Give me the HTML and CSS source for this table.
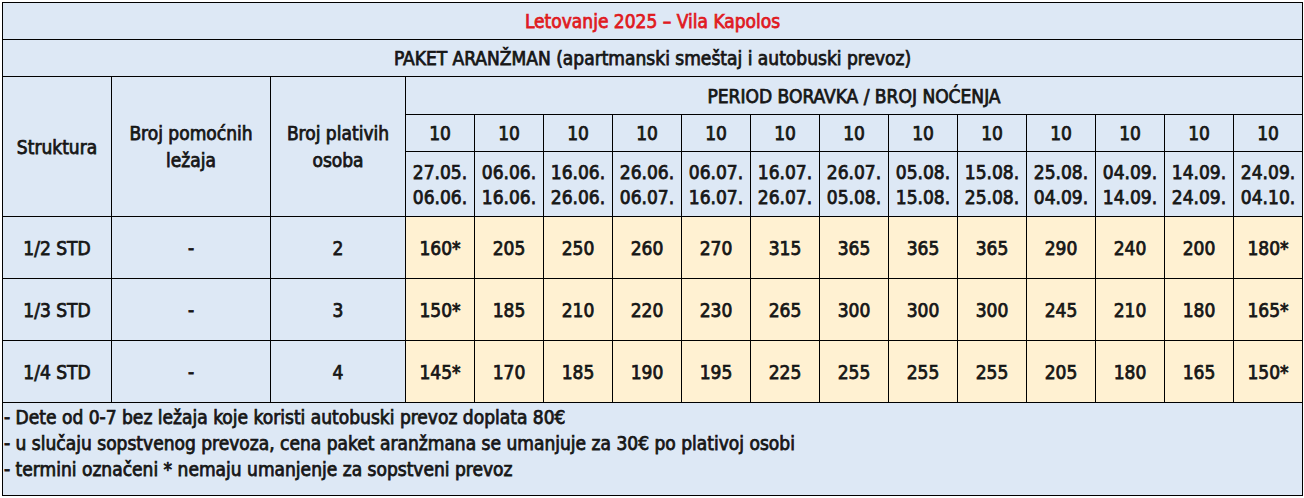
FILE: index.html
```html
<!DOCTYPE html>
<html lang="sr">
<head>
<meta charset="utf-8">
<title>Letovanje 2025 – Vila Kapolos</title>
<link rel="stylesheet" href="styles.css">
</head>
<body>
<div class="wrap">
<table class="price">
  <colgroup>
    <col class="c-str"><col class="c-pom"><col class="c-pla">
    <col class="c-p"><col class="c-p"><col class="c-p"><col class="c-p"><col class="c-p"><col class="c-p"><col class="c-p"><col class="c-p"><col class="c-p"><col class="c-p"><col class="c-p"><col class="c-p"><col class="c-p">
  </colgroup>
  <tr class="r-title"><td colspan="16" class="title">Letovanje 2025 – Vila Kapolos</td></tr>
  <tr class="r-sub"><td colspan="16">PAKET ARANŽMAN (apartmanski smeštaj i autobuski prevoz)</td></tr>
  <tr class="r-period">
    <td rowspan="3">Struktura</td>
    <td rowspan="3" class="two">Broj pomoćnih<br>ležaja</td>
    <td rowspan="3" class="two">Broj plativih<br>osoba</td>
    <td colspan="13">PERIOD BORAVKA / BROJ NOĆENJA</td>
  </tr>
  <tr class="r-nights">
    <td>10</td><td>10</td><td>10</td><td>10</td><td>10</td><td>10</td><td>10</td><td>10</td><td>10</td><td>10</td><td>10</td><td>10</td><td>10</td>
  </tr>
  <tr class="r-dates">
    <td>27.05.<br>06.06.</td><td>06.06.<br>16.06.</td><td>16.06.<br>26.06.</td><td>26.06.<br>06.07.</td><td>06.07.<br>16.07.</td><td>16.07.<br>26.07.</td><td>26.07.<br>05.08.</td><td>05.08.<br>15.08.</td><td>15.08.<br>25.08.</td><td>25.08.<br>04.09.</td><td>04.09.<br>14.09.</td><td>14.09.<br>24.09.</td><td>24.09.<br>04.10.</td>
  </tr>
  <tr class="r-data">
    <td>1/2 STD</td><td>-</td><td>2</td>
    <td class="y">160*</td><td class="y">205</td><td class="y">250</td><td class="y">260</td><td class="y">270</td><td class="y">315</td><td class="y">365</td><td class="y">365</td><td class="y">365</td><td class="y">290</td><td class="y">240</td><td class="y">200</td><td class="y">180*</td>
  </tr>
  <tr class="r-data">
    <td>1/3 STD</td><td>-</td><td>3</td>
    <td class="y">150*</td><td class="y">185</td><td class="y">210</td><td class="y">220</td><td class="y">230</td><td class="y">265</td><td class="y">300</td><td class="y">300</td><td class="y">300</td><td class="y">245</td><td class="y">210</td><td class="y">180</td><td class="y">165*</td>
  </tr>
  <tr class="r-data">
    <td>1/4 STD</td><td>-</td><td>4</td>
    <td class="y">145*</td><td class="y">170</td><td class="y">185</td><td class="y">190</td><td class="y">195</td><td class="y">225</td><td class="y">255</td><td class="y">255</td><td class="y">255</td><td class="y">205</td><td class="y">180</td><td class="y">165</td><td class="y">150*</td>
  </tr>
  <tr class="r-note">
    <td colspan="16" class="note">
      <div class="note-line">- Dete od 0-7 bez ležaja koje koristi autobuski prevoz doplata 80€</div>
      <div class="note-line">- u slučaju sopstvenog prevoza, cena paket aranžmana se umanjuje za 30€ po plativoj osobi</div>
      <div class="note-line">- termini označeni * nemaju umanjenje za sopstveni prevoz</div>
    </td>
  </tr>
</table>
</div>
</body>
</html>
```

FILE: styles.css
```css
html, body {
  margin: 0;
  padding: 0;
  background: #ffffff;
}
.wrap {
  padding: 2px 0 0 2px;
}
.price {
  border-collapse: collapse;
  table-layout: fixed;
  width: 1300px;
  font-family: "DejaVu Sans Condensed", "Liberation Sans", sans-serif;
  font-weight: normal;
  font-size: 19px;
  color: #161616;
  -webkit-text-stroke: 0.75px #161616;
}
.c-str { width: 109px; }
.c-pom { width: 159px; }
.c-pla { width: 135px; }
.c-p { width: 69px; }
.price td {
  border: 1px solid #000;
  background: #dde8f5;
  text-align: center;
  vertical-align: middle;
  padding: 0;
  line-height: 22px;
}
.price td.y {
  background: #fff1d2;
}
.price td.title {
  color: #e01a1f;
  -webkit-text-stroke: 0.75px #e01a1f;
}
.r-title, .r-sub { height: 37px; }
.r-period { height: 38px; }
.r-nights { height: 37px; }
.r-dates { height: 65px; }
.r-dates td { line-height: 25px; padding-top: 2px; }
.price td.two { line-height: 27px; }
.r-data { height: 62px; }
.r-note { height: 93px; }
.price td.note {
  text-align: left;
  vertical-align: top;
  padding: 1px 0 0 1px;
}
.note-line {
  line-height: 26px;
}
```
